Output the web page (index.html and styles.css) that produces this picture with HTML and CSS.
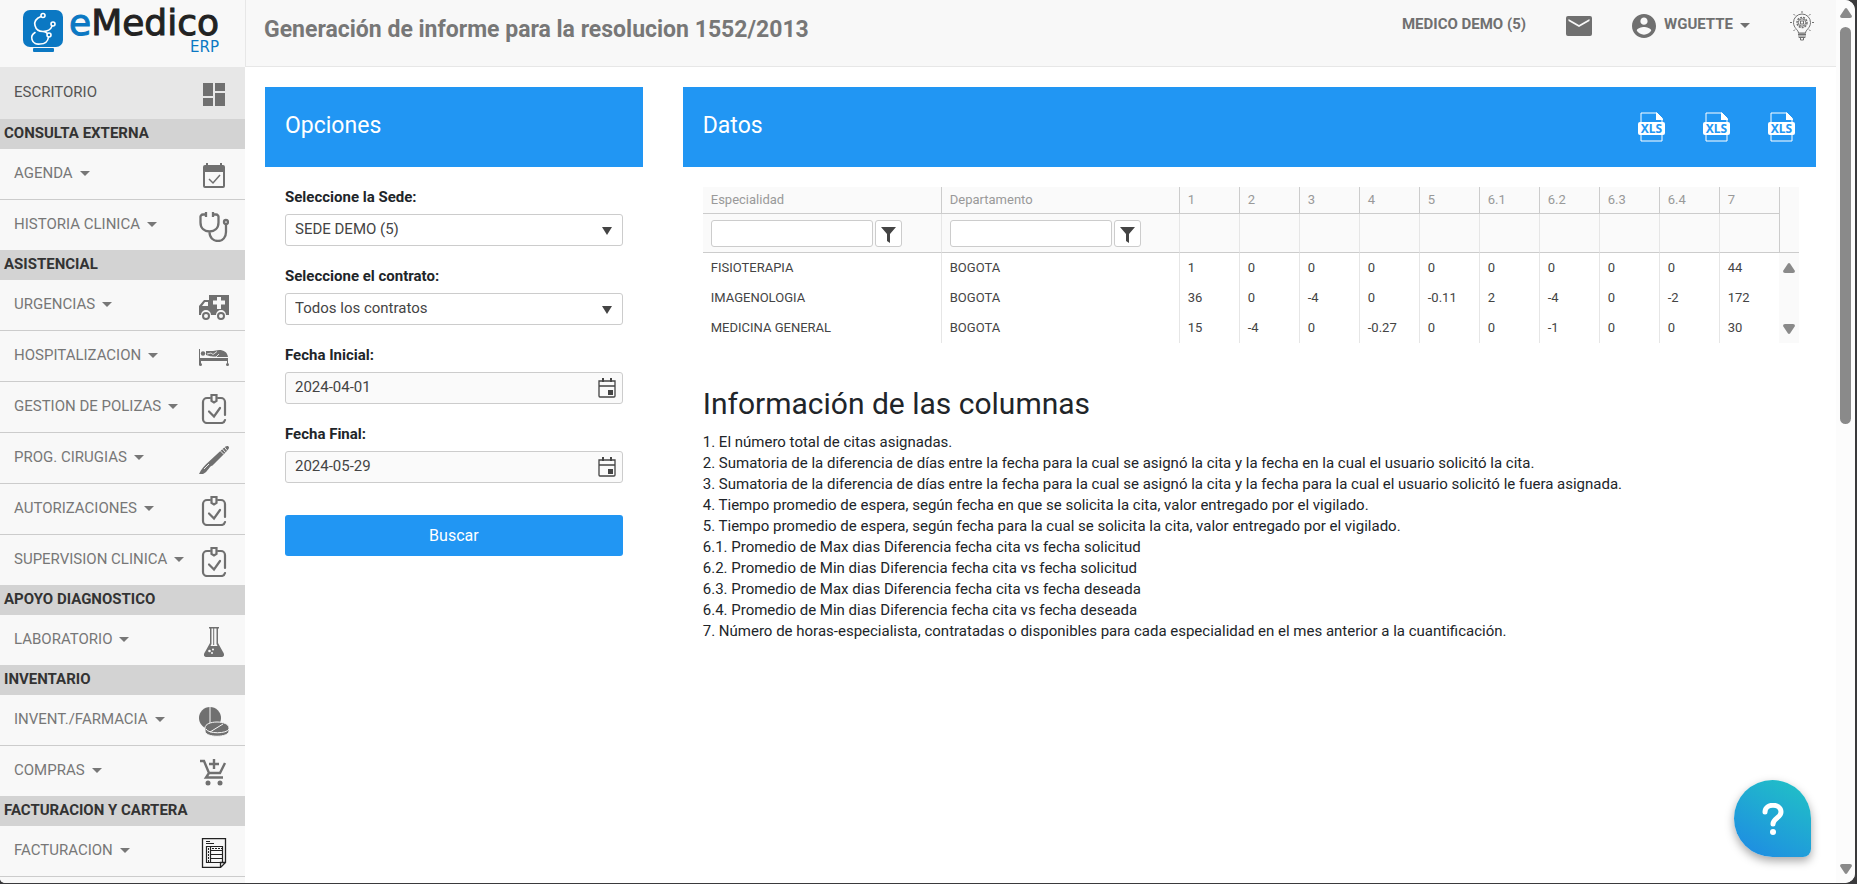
FILE: index.html
```html
<!DOCTYPE html>
<html lang="es">
<head>
<meta charset="utf-8">
<title>eMedico ERP</title>
<link rel="stylesheet" href="styles.css">
</head>
<body>
<svg class="sprite" aria-hidden="true">
  <symbol id="caret" viewBox="0 0 10 5"><path d="M0 0h10L5 5z"/></symbol>
  <symbol id="clip" viewBox="0 0 24 30"><g fill="none" stroke="currentColor" stroke-width="2.200" stroke-linecap="round"><path d="M8 4H5a4 4 0 0 0-4 4v17a4 4 0 0 0 4 4h14a4 4 0 0 0 4-3"/><path d="M16 4h3a4 4 0 0 1 4 4v13"/><path d="M9.500 1h5v6l-2.500 1.500L9.500 7z"/><path d="M7 17.500l5 5 6-8.500"/></g></symbol>
  <symbol id="xls" viewBox="0 0 27 30"><path d="M3 11V1h16l5 5v5M3 22v7h21v-7" fill="none" stroke="#fff" stroke-width="1"/><path d="M18 0l7 7v1h-7z"/><rect x="0" y="10" width="27" height="13" rx="2"/></symbol>
  <symbol id="cal" viewBox="0 0 18 20"><path d="M1 3h16v15a1 1 0 0 1-1 1H2a1 1 0 0 1-1-1zM1 8h16" fill="none" stroke="currentColor" stroke-width="1.3"/><path d="M4 0h2v4H4zM12 0h2v4h-2zM10 12h5v5h-5z"/></symbol>
  <symbol id="funnel" viewBox="0 0 15 16"><path d="M0 0h15L9 7v9l-3-2V7z"/></symbol>
</svg>
<div class="window">
  <aside class="sidebar">
    <a class="logo" href="#" aria-label="eMedico ERP">
      <svg class="logo-mark" viewBox="0 0 40 42"><rect width="40" height="37" rx="7" fill="#0b78c3"/><rect x="10" y="38" width="21" height="4" rx="1" fill="#0b78c3"/><g fill="none" stroke="#fff" stroke-width="1.6" stroke-linecap="round"><circle cx="20" cy="5.500" r="2"/><circle cx="30" cy="14" r="2"/><circle cx="26" cy="25" r="2"/><path d="M18 6.500c-5 2-7 5-6 9 1 4 4 6 8 6s8-2 9-5.500M12 22.500c-3 2-4 4-3 7 1 4 5 5 8 4.500 5 0 8-3 8.500-7M20 21.500c2 0 3 .5 4.500 2"/></g></svg>
      <span class="logo-text"><span class="logo-name"><span class="logo-e">e</span>Medico</span><span class="logo-erp">ERP</span></span>
    </a>
    <nav>
      <ul class="menu">
        <li><a class="item item-active" href="#"><span>ESCRITORIO</span><svg class="ico" viewBox="0 0 30 30"><path d="M4 3h10v13H4zM16 3h10v8H16zM4 18h10v8H4zM16 13h10v13H16z"/></svg></a></li>
      </ul>
      <h2 class="section">CONSULTA EXTERNA</h2>
      <ul class="menu">
        <li><a class="item" href="#"><span>AGENDA</span><svg class="caret"><use href="#caret"/></svg><svg class="ico" viewBox="0 0 30 30"><path fill-rule="evenodd" d="M7 2h2v2h12V2h2v2h1a2 2 0 0 1 2 2v19a2 2 0 0 1-2 2H6a2 2 0 0 1-2-2V6a2 2 0 0 1 2-2h1zM6 11v14h18V11z"/><path d="M10 18l4 4 7-8" fill="none" stroke="currentColor" stroke-width="1.500"/></svg></a></li>
        <li><a class="item" href="#"><span>HISTORIA CLINICA</span><svg class="caret"><use href="#caret"/></svg><svg class="ico" viewBox="0 0 30 30"><g fill="none" stroke="currentColor" stroke-width="2.300"><path d="M7 2.500H4a2.500 2.500 0 0 0-2.500 3v5c0 6 4 9 9 9s9-3 9-9v-5a2.500 2.500 0 0 0-2.500-3h-3M10.500 20c0 6 4 9 8.500 9 5 0 8-4 8-9v-7"/><circle cx="27" cy="10" r="2"/><path d="M7 0v5M14 0v5"/></g></svg></a></li>
      </ul>
      <h2 class="section">ASISTENCIAL</h2>
      <ul class="menu">
        <li><a class="item" href="#"><span>URGENCIAS</span><svg class="caret"><use href="#caret"/></svg><svg class="ico" viewBox="0 0 30 30"><path fill-rule="evenodd" d="M10 3h20v20h-3a5 5 0 0 0-10 0h-5a5 5 0 0 0-10 0H0v-9l5-6h5zM3 14h6v-4H6zM18 5v3.500h-4v4h4V17h4v-4.500h4v-4h-4V5z"/><path fill-rule="evenodd" d="M7 20a4 4 0 1 1 0 8 4 4 0 0 1 0-8zm0 2a2 2 0 1 0 0 4 2 2 0 0 0 0-4zM22 20a4 4 0 1 1 0 8 4 4 0 0 1 0-8zm0 2a2 2 0 1 0 0 4 2 2 0 0 0 0-4z"/></svg></a></li>
        <li><a class="item" href="#"><span>HOSPITALIZACION</span><svg class="caret"><use href="#caret"/></svg><svg class="ico" viewBox="0 0 30 30"><path d="M0 6h1v9h28v7h-1v-4H2v4H0z"/><circle cx="4" cy="10.500" r="2.200"/><circle cx="1.500" cy="21.500" r="1.500"/><circle cx="28.500" cy="21.500" r="1.500"/><path d="M7 8h7l6-1c5 0 8 2 9 7H14l-7-2z"/><path d="M8 11l4-1 2 1.500 4-3M12 14h5l3-3" stroke="#f8f8f8" stroke-width=".8" fill="none"/></svg></a></li>
        <li><a class="item" href="#"><span>GESTION DE POLIZAS</span><svg class="caret"><use href="#caret"/></svg><svg class="ico"><use href="#clip"/></svg></a></li>
        <li><a class="item" href="#"><span>PROG. CIRUGIAS</span><svg class="caret"><use href="#caret"/></svg><svg class="ico" viewBox="0 0 30 30"><path d="M0 29C2 24 6 20 10 16.500L23.500 4l3-2.500c2.500-1.500 4.500.500 3 2.500L27 7 13.500 20.500C10 21 9 27 4 29z"/><path d="M20.500 5l4.500 4.500M22.500 3l4 4.500M25 1.500l3 4M5 24l5-5" stroke="#f8f8f8" stroke-width=".9" fill="none"/></svg></a></li>
        <li><a class="item" href="#"><span>AUTORIZACIONES</span><svg class="caret"><use href="#caret"/></svg><svg class="ico"><use href="#clip"/></svg></a></li>
        <li><a class="item" href="#"><span>SUPERVISION CLINICA</span><svg class="caret"><use href="#caret"/></svg><svg class="ico"><use href="#clip"/></svg></a></li>
      </ul>
      <h2 class="section">APOYO DIAGNOSTICO</h2>
      <ul class="menu">
        <li><a class="item" href="#"><span>LABORATORIO</span><svg class="caret"><use href="#caret"/></svg><svg class="ico" viewBox="0 0 30 30"><path fill-rule="evenodd" d="M10 0h10v1.500h-1V16l5 9c2 3 1 5-2 5H8c-3 0-4-2-2-5l5-9V1.500h-1zM12.500 1.500V17l-1 2h7l-1-2V1.500z"/><path d="M14.700 1v17" stroke="currentColor" stroke-width="1"/><g fill="#f8f8f8"><circle cx="10.500" cy="24" r="1.300"/><circle cx="14" cy="22.500" r="1"/><circle cx="13" cy="26" r="1"/></g></svg></a></li>
      </ul>
      <h2 class="section">INVENTARIO</h2>
      <ul class="menu">
        <li><a class="item" href="#"><span>INVENT./FARMACIA</span><svg class="caret"><use href="#caret"/></svg><svg class="ico" viewBox="0 0 30 30"><circle cx="11" cy="11" r="11"/><path d="M11 0v20" stroke="#f8f8f8"/><path d="M6 21c0-8 24-8 24 0v3c0 7-24 7-24 0z" stroke="#f8f8f8"/><path d="M7 22c2 5 21 5 23 0M11 25l13-8" stroke="#f8f8f8" fill="none"/></svg></a></li>
        <li><a class="item" href="#"><span>COMPRAS</span><svg class="caret"><use href="#caret"/></svg><svg class="ico" viewBox="0 0 30 30"><g fill="none" stroke="currentColor" stroke-width="2.400"><path d="M1 3h4l5 12h11l5-10M10 15l-3 4.500h17M15 1v10M10 6h10"/></g><circle cx="9" cy="25" r="2.500"/><circle cx="21" cy="25" r="2.500"/></svg></a></li>
      </ul>
      <h2 class="section">FACTURACION Y CARTERA</h2>
      <ul class="menu menu-open">
        <li><a class="item" href="#"><span>FACTURACION</span><svg class="caret"><use href="#caret"/></svg><svg class="ico ico-dark" viewBox="0 0 30 30"><g fill="none" stroke="currentColor"><path d="M3.500.5h23v24l-5 5h-18zM26 24.500h-4.500V29" stroke-width="1.300"/><path d="M7 3.500h4M7 5.500h8" stroke-width="1"/><path d="M7.500 8.500h16v16h-16zM11.500 8v17M11 12.500h12M11 16.500h12M11 20.500h12" stroke-width="1.200"/><path d="M13 10.500h10M9.500 10v14" stroke-dasharray="2 1"/></g></svg></a></li>
      </ul>
    </nav>
  </aside>
  <div class="page">
    <header class="topbar">
      <h1 class="title">Generación de informe para la resolucion 1552/2013</h1>
      <div class="account">
        <span class="site">MEDICO DEMO (5)</span>
        <button class="plain" type="button" aria-label="Mensajes"><svg class="mail" viewBox="0 0 26 20"><path fill-rule="evenodd" d="M2 0h22a2 2 0 0 1 2 2v16a2 2 0 0 1-2 2H2a2 2 0 0 1-2-2V2a2 2 0 0 1 2-2zM2.500 3v2L13 11l10.500-6V3L13 9z"/></svg></button>
        <button class="plain user" type="button"><svg class="avatar" viewBox="2 2 20 20"><path d="M12 2C6.480 2 2 6.480 2 12s4.480 10 10 10 10-4.480 10-10S17.520 2 12 2zm0 3c1.660 0 3 1.340 3 3s-1.340 3-3 3-3-1.340-3-3 1.340-3 3-3zm0 14.200c-2.500 0-4.710-1.280-6-3.220.03-1.990 4-3.080 6-3.080 1.990 0 5.970 1.090 6 3.080-1.290 1.940-3.500 3.220-6 3.220z"/></svg><span>WGUETTE</span><svg class="caret"><use href="#caret"/></svg></button>
        <button class="plain" type="button" aria-label="Ideas"><svg class="bulb" viewBox="0 0 24 30"><g fill="none" stroke="currentColor" stroke-width="1"><path d="M8.500 22c0-3-5-5-5-10.500a8.500 8.500 0 0 1 17 0C20.500 17 15.500 19 15.500 22z"/><circle cx="12" cy="11.500" r="5" stroke-dasharray="2 1" stroke-width="1.500"/><circle cx="12" cy="11.500" r="3.700"/><rect x="10.500" y="10" width="3" height="3"/><path d="M12 0v2M0 11.500h2M22 11.500h2M3.500 3l1.500 1.500M20.500 3L19 4.500M3.500 20L5 18.500M20.500 20L19 18.500M10.500 27v2h3v-2"/></g><path d="M8 22.500h8v2H8zM8 25.500h8l-1 1.500H9z"/></svg></button>
      </div>
    </header>
    <main class="content">
      <section class="panel">
        <div class="panel-head"><h2>Opciones</h2></div>
        <form class="panel-body">
          <div class="field"><label for="sede">Seleccione la Sede:</label><div class="control"><select id="sede"><option>SEDE DEMO (5)</option></select><svg class="arrow" viewBox="0 0 10 8"><path d="M0 0h10L5 8z"/></svg></div></div>
          <div class="field"><label for="contrato">Seleccione el contrato:</label><div class="control"><select id="contrato"><option>Todos los contratos</option></select><svg class="arrow" viewBox="0 0 10 8"><path d="M0 0h10L5 8z"/></svg></div></div>
          <div class="field"><label for="inicial">Fecha Inicial:</label><div class="control date"><input id="inicial" type="text" value="2024-04-01"><button class="plain" type="button" aria-label="Abrir calendario"><svg class="cal"><use href="#cal"/></svg></button></div></div>
          <div class="field"><label for="final">Fecha Final:</label><div class="control date"><input id="final" type="text" value="2024-05-29"><button class="plain" type="button" aria-label="Abrir calendario"><svg class="cal"><use href="#cal"/></svg></button></div></div>
          <button class="search" type="button">Buscar</button>
        </form>
      </section>
      <section class="panel">
        <div class="panel-head"><h2>Datos</h2>
          <div class="exports">
            <button class="plain xls" type="button"><svg><use href="#xls"/></svg><span>XLS</span></button>
            <button class="plain xls" type="button"><svg><use href="#xls"/></svg><span>XLS</span></button>
            <button class="plain xls" type="button"><svg><use href="#xls"/></svg><span>XLS</span></button>
          </div>
        </div>
        <div class="panel-body">
          <table class="grid">
            <colgroup><col class="c-wide"><col class="c-wide"><col class="c-num" span="10"><col class="c-bar"></colgroup>
            <thead>
              <tr class="heads"><th>Especialidad</th><th>Departamento</th><th>1</th><th>2</th><th>3</th><th>4</th><th>5</th><th>6.1</th><th>6.2</th><th>6.3</th><th>6.4</th><th>7</th><td class="bar" rowspan="2"></td></tr>
              <tr class="filters"><td><div class="filter"><input type="text" aria-label="Filtrar especialidad"><button type="button" aria-label="Filtro"><svg><use href="#funnel"/></svg></button></div></td><td><div class="filter"><input type="text" aria-label="Filtrar departamento"><button type="button" aria-label="Filtro"><svg><use href="#funnel"/></svg></button></div></td><td></td><td></td><td></td><td></td><td></td><td></td><td></td><td></td><td></td><td></td></tr>
            </thead>
            <tbody>
              <tr><td>FISIOTERAPIA</td><td>BOGOTA</td><td>1</td><td>0</td><td>0</td><td>0</td><td>0</td><td>0</td><td>0</td><td>0</td><td>0</td><td>44</td><td class="bar" rowspan="3"><div class="steps"><svg class="step" viewBox="0 0 12 10"><path d="M6 0Q7 0 8 2l4 6q0 2-2 2H2Q0 10 0 8l4-6Q5 0 6 0z"/></svg><svg class="step" viewBox="0 0 12 10"><path d="M6 10Q7 10 8 8l4-6q0-2-2-2H2Q0 0 0 2l4 6q1 2 2 2z"/></svg></div></td></tr>
              <tr><td>IMAGENOLOGIA</td><td>BOGOTA</td><td>36</td><td>0</td><td>-4</td><td>0</td><td>-0.11</td><td>2</td><td>-4</td><td>0</td><td>-2</td><td>172</td></tr>
              <tr><td>MEDICINA GENERAL</td><td>BOGOTA</td><td>15</td><td>-4</td><td>0</td><td>-0.27</td><td>0</td><td>0</td><td>-1</td><td>0</td><td>0</td><td>30</td></tr>
            </tbody>
          </table>
          <h3 class="info-title">Información de las columnas</h3>
          <div class="info">
            <p>1. El número total de citas asignadas.</p>
            <p>2. Sumatoria de la diferencia de días entre la fecha para la cual se asignó la cita y la fecha en la cual el usuario solicitó la cita.</p>
            <p>3. Sumatoria de la diferencia de días entre la fecha para la cual se asignó la cita y la fecha para la cual el usuario solicitó le fuera asignada.</p>
            <p>4. Tiempo promedio de espera, según fecha en que se solicita la cita, valor entregado por el vigilado.</p>
            <p>5. Tiempo promedio de espera, según fecha para la cual se solicita la cita, valor entregado por el vigilado.</p>
            <p>6.1. Promedio de Max dias Diferencia fecha cita vs fecha solicitud</p>
            <p>6.2. Promedio de Min dias Diferencia fecha cita vs fecha solicitud</p>
            <p>6.3. Promedio de Max dias Diferencia fecha cita vs fecha deseada</p>
            <p>6.4. Promedio de Min dias Diferencia fecha cita vs fecha deseada</p>
            <p>7. Número de horas-especialista, contratadas o disponibles para cada especialidad en el mes anterior a la cuantificación.</p>
          </div>
        </div>
      </section>
    </main>
  </div>
  <div class="scroll" aria-hidden="true">
    <svg class="step" viewBox="0 0 12 10"><path d="M6 0Q7 0 8 2l4 6q0 2-2 2H2Q0 10 0 8l4-6Q5 0 6 0z"/></svg>
    <div class="track"><div class="thumb"></div></div>
    <svg class="step" viewBox="0 0 12 10"><path d="M6 10Q7 10 8 8l4-6q0-2-2-2H2Q0 0 0 2l4 6q1 2 2 2z"/></svg>
  </div>
  <button class="help" type="button" aria-label="Ayuda"><svg viewBox="0 0 22 32"><path d="M3 9c0-9 16-9 16 0 0 6-8 6-8 12" fill="none" stroke="#fff" stroke-width="5" stroke-linecap="round"/><circle cx="11" cy="29" r="3" fill="#fff"/></svg></button>
</div>
</body>
</html>
```

FILE: styles.css
```css
* { box-sizing: border-box; }
body { margin: 0; background: #3a3a3c; font: 15px/21px Roboto, "Liberation Sans", sans-serif; color: #212529; }
h1, h2, h3, p, ul { margin: 0; padding: 0; }
ul { list-style: none; }
svg { display: block; fill: currentColor; flex: none; }
input, select, button { font: inherit; color: inherit; margin: 0; }
a { color: inherit; text-decoration: none; }
.sprite { display: none; }
.plain { border: 0; background: none; padding: 0; cursor: pointer; }

.window { position: relative; display: flex; height: calc(100vh - 1px); margin-right: 2px; overflow: hidden; background: #fff; border-radius: 0 10px 10px 5px; }

.sidebar { flex: none; width: 245px; overflow: hidden; background: #f8f8f8; color: #777; }
.logo { display: flex; gap: 6px; height: 67px; padding: 6px 0 0 23px; }
.logo-mark { width: 40px; height: 42px; margin-top: 4px; }
.logo-text { display: flex; flex-direction: column; align-items: flex-end; font-family: "DejaVu Sans", sans-serif; }
.logo-name { font-size: 36px; line-height: 34px; color: #222; -webkit-text-stroke: 1px currentColor; }
.logo-e { color: #0b78c3; }
.logo-erp { font-size: 15px; line-height: 15px; color: #0b78c3; }
.item { display: flex; align-items: center; height: 51px; padding: 0 16px 2px 14px; border-bottom: 1px solid #ccc; }
li:last-child > .item { height: 50px; border-bottom: 0; }
li:last-child > .item-active { height: 52px; background: #e7e7e7; color: #555; }
.menu-open { border-bottom: 1px solid #ccc; }
.item .ico { width: 30px; height: 30px; margin: 5px 0 0 auto; color: #707070; }
.item .ico-dark { color: #222; }
.caret { width: 10px; height: 5px; margin-left: 7px; }
.section { height: 30px; padding-left: 4px; background: #d3d3d3; color: #333; font-size: 15px; line-height: 29px; font-weight: 700; }

.page { flex: 1; min-width: 0; }
.topbar { display: flex; justify-content: space-between; height: 67px; padding: 0 22px 0 18px; background: #f8f8f8; border-bottom: 1px solid #e7e7e7; border-left: 1px solid #e7e7e7; color: #707070; }
.title { font-size: 23px; line-height: 60px; font-weight: 700; color: #777; }
.account { display: flex; align-items: center; height: 51px; gap: 40px; font-weight: 700; color: #707070; }
.site, .user span { padding-bottom: 2px; }
.mail { width: 26px; height: 20px; }
.user { display: flex; align-items: center; font-weight: 700; }
.avatar { width: 24px; height: 24px; margin-right: 8px; }
.bulb { width: 24px; height: 30px; }

.content { display: grid; grid-template-columns: minmax(0, 1fr) minmax(0, 3fr); gap: 40px; padding: 20px; }
.panel-head { display: flex; align-items: center; justify-content: space-between; height: 80px; padding: 0 21px 0 20px; background: #2196f3; color: #fff; }
.panel-head h2 { padding-bottom: 2px; font-size: 23px; line-height: 30px; font-weight: 400; }
.panel-body { padding: 20px; }
.exports { display: flex; gap: 38px; }
.xls { position: relative; width: 27px; height: 30px; }
.xls svg { width: 27px; height: 30px; }
.xls span { position: absolute; inset: 10px 0 auto; color: #2196f3; font: 700 12px/13px "Noto Sans", sans-serif; text-align: center; }

.field { margin-bottom: 20px; }
.field label { display: block; margin-bottom: 6px; font-weight: 700; }
.control { position: relative; display: flex; height: 32px; border: 1px solid #ccc; border-radius: 3px; background: #fff; color: #444; }
.control select, .control input { flex: 1; min-width: 0; border: 0; padding: 0 9px 1px; background: none; appearance: none; outline: 0; }
.control .arrow { position: absolute; right: 10px; top: 12px; width: 10px; height: 8px; pointer-events: none; }
.date { background: #fafafa; }
.date .plain { padding: 0 6px; }
.cal { width: 18px; height: 20px; }
.search { width: 100%; height: 41px; margin-top: 12px; border: 0; border-radius: 3px; background: #2196f3; color: #fff; font-size: 16px; }

.grid { width: 100%; table-layout: fixed; border-collapse: separate; border-spacing: 0; font-size: 13px; line-height: 18px; color: #444; }
.c-wide { width: 238px; }
.c-num { width: 60px; }
.c-bar { width: 20px; }
.grid th, .grid td { padding: 0 0 0 8px; text-align: left; font-weight: 400; border-left: 1px solid #e6e6e6; white-space: nowrap; }
.grid tr > :first-child { border-left: 0; }
.grid thead { background: #fafafa; color: #999; }
.grid thead th { border-left-color: #ccc; }
.heads th { height: 27px; border-bottom: 1px solid #ccc; }
.filters td { height: 39px; border-bottom: 1px solid #ccc; }
.grid thead .bar { border-left-color: #ccc; border-bottom: 1px solid #ccc; }
.grid tbody td { height: 30px; }
.grid tbody .bar { height: 90px; padding: 0; border-left: 0; background: #fafafa; vertical-align: top; }
.steps { display: flex; flex-direction: column; justify-content: space-between; align-items: center; height: 90px; padding: 10px 0 9px; }
.step { width: 12px; height: 10px; color: #8a8a8a; }
.filter { display: flex; gap: 2px; height: 27px; color: #444; }
.filter input { width: 162px; border: 1px solid #ccc; border-radius: 3px; background: #fff; }
.filter button { display: flex; align-items: center; justify-content: center; width: 27px; padding: 3px 0 0; border: 1px solid #ccc; border-radius: 3px; background: #fff; }
.filter svg { width: 15px; height: 16px; }

.info-title { margin: 42px 0 9px; font-size: 30px; line-height: 38px; font-weight: 400; }

.scroll { flex: none; display: flex; flex-direction: column; align-items: center; width: 19px; padding: 8px 0 9px; background: #fcfcfc; }
.track { flex: 1; padding: 9px 0; }
.thumb { width: 11px; height: 48%; border-radius: 6px; background: #8a8a8a; }
.help { position: absolute; right: 44px; bottom: 26px; display: flex; align-items: center; justify-content: center; width: 77px; height: 77px; border: 0; border-radius: 50% 50% 8px 50%; background: linear-gradient(30deg, #1e88e5, #21c4c4); box-shadow: 0 4px 10px rgba(0, 0, 0, .35); }
.help svg { width: 22px; height: 32px; }
```
